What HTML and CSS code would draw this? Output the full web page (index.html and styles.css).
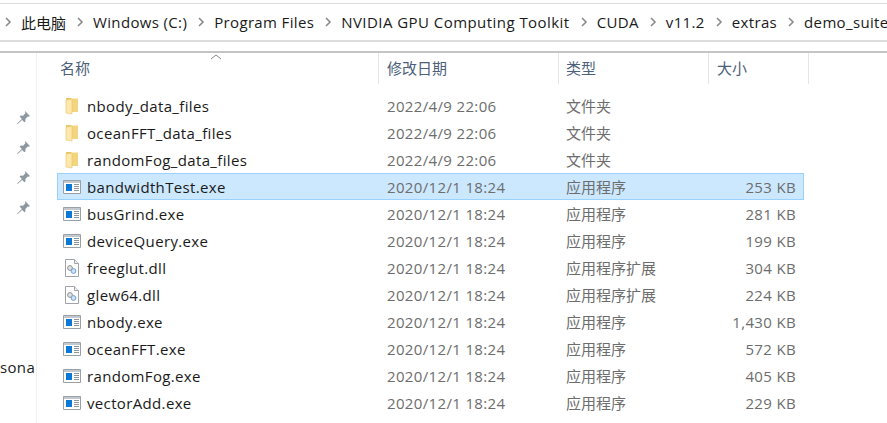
FILE: index.html
```html
<!DOCTYPE html>
<html lang="zh-CN">
<head>
    <meta charset="UTF-8">
    <title>demo_suite</title>
    <link rel="stylesheet" href="styles.css">
</head>
<body>
    <svg class="defs" width="0" height="0">
        <symbol id="chev" viewBox="0 0 8 12">
            <path d="M2 2l4 4-4 4" fill="none" stroke="#8a8a8a" stroke-width="1.6"/>
        </symbol>
        <symbol id="pin" viewBox="0 0 14 14">
            <path d="M8.5 1l4.5 4.5-1 .8-1-.3-2.300 2.300.2 2.200-1 1-2.200-2.200L1.500 13 1 12.500l4.500-4.200L3.400 6.100l1-1 2.200.2L8.800 3l-.3-1z" fill="#8c979f"/>
        </symbol>
        <symbol id="folder" viewBox="0 0 18 18">
            <path d="M3 1h5l1 1v14H5l-2-1z" fill="#e9c662"/>
            <path d="M9 1.500h6V15H9z" fill="#f3d57f"/>
            <path d="M3 3l6-1v15l-6-1z" fill="#fde9a9"/>
            <path d="M3 3l6-1v15l-6-1z" fill="none" stroke="#e5c46a" stroke-width=".6"/>
        </symbol>
        <symbol id="exe" viewBox="0 0 18 18">
            <path d="M.5 2.500h17v13H.5z" fill="#fff" stroke="#9aa0a5"/>
            <path d="M1 3h16v2H1z" fill="#c3c9ce"/>
            <path d="M3 6h6v7H3z" fill="#0a78d7"/>
            <path d="M11 6.500h5M11 8.500h5M11 10.500h5M11 12.500h5" stroke="#8d9399"/>
        </symbol>
        <symbol id="dll" viewBox="0 0 18 18">
            <path d="M2.500.5h9l4 4v13h-13z" fill="#fff" stroke="#a0a4a8"/>
            <path d="M11.500.5v4h4" fill="#eee" stroke="#a0a4a8"/>
            <circle cx="7" cy="9" r="2.400" fill="#e3e3e3" stroke="#8f8f8f"/>
            <circle cx="10.500" cy="12" r="2.400" fill="#cfe2f5" stroke="#6f9fd0"/>
        </symbol>
    </svg>

    <nav class="crumbs">
        <svg class="chev"><use href="#chev"/></svg><span class="cjk">此电脑</span>
        <svg class="chev"><use href="#chev"/></svg><span>Windows (C:)</span>
        <svg class="chev"><use href="#chev"/></svg><span>Program Files</span>
        <svg class="chev"><use href="#chev"/></svg><span class="wide">NVIDIA GPU Computing Toolkit</span>
        <svg class="chev"><use href="#chev"/></svg><span>CUDA</span>
        <svg class="chev"><use href="#chev"/></svg><span>v11.2</span>
        <svg class="chev"><use href="#chev"/></svg><span>extras</span>
        <svg class="chev"><use href="#chev"/></svg><span>demo_suite</span>
    </nav>

    <div class="main">
        <aside class="side">
            <div class="pins">
                <svg class="pin"><use href="#pin"/></svg>
                <svg class="pin"><use href="#pin"/></svg>
                <svg class="pin"><use href="#pin"/></svg>
                <svg class="pin"><use href="#pin"/></svg>
            </div>
            <div class="side-label">sona</div>
        </aside>

        <section class="list">
            <div class="head">
                <div class="hcell hname">名称<svg class="sort" width="12" height="6"><path d="M1 5l5-4 5 4" fill="none" stroke="#8a8a8a"/></svg></div>
                <div class="hcell hdate">修改日期</div>
                <div class="hcell htype">类型</div>
                <div class="hcell hsize">大小</div>
            </div>
            <div class="rows">
                <div class="row"><svg class="ico"><use href="#folder"/></svg><span class="name">nbody_data_files</span><span>2022/4/9 22:06</span><span class="cjk">文件夹</span><span class="size"></span></div>
                <div class="row"><svg class="ico"><use href="#folder"/></svg><span class="name">oceanFFT_data_files</span><span>2022/4/9 22:06</span><span class="cjk">文件夹</span><span class="size"></span></div>
                <div class="row"><svg class="ico"><use href="#folder"/></svg><span class="name">randomFog_data_files</span><span>2022/4/9 22:06</span><span class="cjk">文件夹</span><span class="size"></span></div>
                <div class="row selected"><svg class="ico"><use href="#exe"/></svg><span class="name">bandwidthTest.exe</span><span>2020/12/1 18:24</span><span class="cjk">应用程序</span><span class="size">253 KB</span></div>
                <div class="row"><svg class="ico"><use href="#exe"/></svg><span class="name">busGrind.exe</span><span>2020/12/1 18:24</span><span class="cjk">应用程序</span><span class="size">281 KB</span></div>
                <div class="row"><svg class="ico"><use href="#exe"/></svg><span class="name">deviceQuery.exe</span><span>2020/12/1 18:24</span><span class="cjk">应用程序</span><span class="size">199 KB</span></div>
                <div class="row"><svg class="ico"><use href="#dll"/></svg><span class="name">freeglut.dll</span><span>2020/12/1 18:24</span><span class="cjk">应用程序扩展</span><span class="size">304 KB</span></div>
                <div class="row"><svg class="ico"><use href="#dll"/></svg><span class="name">glew64.dll</span><span>2020/12/1 18:24</span><span class="cjk">应用程序扩展</span><span class="size">224 KB</span></div>
                <div class="row"><svg class="ico"><use href="#exe"/></svg><span class="name">nbody.exe</span><span>2020/12/1 18:24</span><span class="cjk">应用程序</span><span class="size">1,430 KB</span></div>
                <div class="row"><svg class="ico"><use href="#exe"/></svg><span class="name">oceanFFT.exe</span><span>2020/12/1 18:24</span><span class="cjk">应用程序</span><span class="size">572 KB</span></div>
                <div class="row"><svg class="ico"><use href="#exe"/></svg><span class="name">randomFog.exe</span><span>2020/12/1 18:24</span><span class="cjk">应用程序</span><span class="size">405 KB</span></div>
                <div class="row"><svg class="ico"><use href="#exe"/></svg><span class="name">vectorAdd.exe</span><span>2020/12/1 18:24</span><span class="cjk">应用程序</span><span class="size">229 KB</span></div>
            </div>
        </section>
    </div>
</body>
</html>
```

FILE: styles.css
```css
* {
    margin: 0;
    padding: 0;
    box-sizing: border-box;
}
html, body {
    height: 100%;
    overflow: hidden;
}
body {
    background: #fff;
    font-family: "Open Sans", "Noto Sans CJK SC", sans-serif;
    font-size: 15px;
    letter-spacing: .35px;
    color: #1a1a1a;
    display: flex;
    flex-direction: column;
    padding-top: 3px;
}
.defs {
    position: absolute;
}
.cjk {
    letter-spacing: 0;
}
.wide {
    letter-spacing: .45px;
}
.crumbs {
    height: 39px;
    flex: none;
    border-top: 1px solid #dcdcdc;
    border-bottom: 2px solid #dcdcdc;
    display: flex;
    align-items: center;
    white-space: nowrap;
    overflow: hidden;
}
.chev {
    width: 8px;
    height: 12px;
    margin: 0 9px 0 4px;
    flex: none;
}
.crumbs span {
    margin-right: 6px;
}
.main {
    flex: 1;
    min-height: 0;
    margin-top: 9px;
    border-top: 2px solid #c4c4c4;
    display: flex;
}
.side {
    width: 37px;
    flex: none;
    border-right: 1px solid #f0f0f0;
    display: flex;
    flex-direction: column;
}
.pins {
    display: flex;
    flex-direction: column;
    gap: 15px;
    padding: 57px 0 0 16px;
}
.pin {
    width: 15px;
    height: 15px;
}
.side-label {
    margin-top: 142px;
    line-height: 20px;
    color: #222;
}
.list {
    flex: 1;
    min-width: 0;
}
.head {
    display: flex;
    height: 31px;
    margin-left: 13px;
    color: #4c607a;
    letter-spacing: 0;
}
.hcell {
    border-right: 1px solid #e5e5e5;
    padding: 5px 0 0 8px;
    line-height: 20px;
    position: relative;
}
.hname { width: 329px; padding-left: 10px; }
.hdate { width: 180px; }
.htype { width: 150px; padding-left: 7px; }
.hsize { width: 100px; }
.sort {
    position: absolute;
    left: 160px;
    top: 1px;
}
.rows {
    margin: 8px 0 0 20px;
}
.row {
    display: grid;
    grid-template-columns: 24px 300px 179px 150px 80px;
    align-items: center;
    height: 27px;
    color: #6d6d6d;
    border: 1px solid transparent;
    width: 747px;
    padding-left: 5px;
}
.row.selected {
    background: #cce8ff;
    border-color: #99d1ff;
}
.ico {
    width: 18px;
    height: 18px;
}
.name {
    color: #1a1a1a;
}
.size {
    text-align: right;
}
```
